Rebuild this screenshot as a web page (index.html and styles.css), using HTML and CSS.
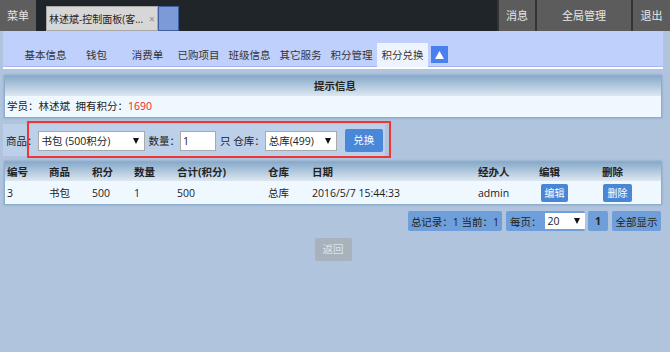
FILE: index.html
```html
<!DOCTYPE html>
<html>
<head>
<meta charset="utf-8">
<title>积分兑换</title>
<link rel="stylesheet" href="styles.css">
</head>
<body>
<div class="topbar">
  <div class="menu">菜单</div>
  <div class="tabs">
    <div class="tab">林述斌-控制面板(客...<span class="close">×</span></div>
    <div class="tab-blue"></div>
  </div>
  <div class="right">
    <div class="ritem r1">消息</div>
    <div class="ritem r2">全局管理</div>
    <div class="ritem r3">退出</div>
  </div>
</div>
<div class="wrap">
  <div class="nav">
    <span class="ni">基本信息</span>
    <span class="ni">钱包</span>
    <span class="ni">消费单</span>
    <span class="ni">已购项目</span>
    <span class="ni">班级信息</span>
    <span class="ni">其它服务</span>
    <span class="ni">积分管理</span>
    <span class="ni active">积分兑换</span>
    <span class="up"><svg width="9" height="8" viewBox="0 0 9 8"><polygon points="4.5,0 9,8 0,8" fill="#fff"/></svg></span>
  </div>

  <div class="panel info">
    <div class="phead">提示信息</div>
    <div class="pbody">学员：林述斌&nbsp; 拥有积分：<span class="red">1690</span></div>
  </div>

  <div class="form">
    <span class="lbl">商品：</span>
    <div class="sel s1"><span>书包 (500积分)</span><svg class="arr" width="6" height="6" viewBox="0 0 6 6"><polygon points="0,0 6,0 3,6" fill="#111"/></svg></div>
    <span class="lbl l2">数量：</span>
    <div class="inp">1</div>
    <span class="lbl l3">只 仓库：</span>
    <div class="sel s2"><span>总库(499)</span><svg class="arr" width="6" height="6" viewBox="0 0 6 6"><polygon points="0,0 6,0 3,6" fill="#111"/></svg></div>
    <span class="btn-blue">兑换</span>
    <div class="mark"></div>
  </div>

  <div class="panel tbl">
    <div class="row thead">
      <span>编号</span><span>商品</span><span>积分</span><span>数量</span><span>合计(积分)</span><span>仓库</span><span>日期</span><span>经办人</span><span>编辑</span><span>删除</span>
    </div>
    <div class="row tbody">
      <span>3</span><span>书包</span><span>500</span><span>1</span><span>500</span><span>总库</span><span>2016/5/7 15:44:33</span><span>admin</span><span><i class="sbtn e">编辑</i></span><span><i class="sbtn d">删除</i></span>
    </div>
  </div>

  <div class="pager">
    <span class="pbox p1">总记录：1 当前：1</span>
    <span class="pbox p2">每页：<span class="psel"><span>20</span><svg class="arr" width="6" height="6" viewBox="0 0 6 6"><polygon points="0,0 6,0 3,6" fill="#111"/></svg></span></span>
    <span class="pbox p3">1</span>
    <span class="pbox p4">全部显示</span>
  </div>

  <div class="back"><span class="btn-gray">返回</span></div>
</div>
</body>
</html>
```

FILE: styles.css
```css
* { box-sizing: border-box; }
html, body { margin: 0; padding: 0; }
body {
  background: #b0c4de;
  font-family: "Open Sans", "Noto Sans CJK SC", sans-serif;
  font-size: 10.5px;
  color: #222;
  width: 670px;
  height: 352px;
  overflow: hidden;
}

/* top bar */
.topbar {
  height: 31px;
  background: #1f2528;
  display: flex;
  color: #e6e6e6;
  font-size: 11px;
}
.menu {
  width: 36px;
  background: #5e5e5e;
  display: flex;
  align-items: center;
  justify-content: center;
  padding-bottom: 2px;
}
.tabs {
  display: flex;
  margin-left: 10px;
  padding-top: 6px;
  height: 31px;
}
.tab {
  width: 112px;
  background: #d7d7d7;
  border: 1px solid #a8a8a8;
  color: #1e1e1e;
  font-size: 10px;
  display: flex;
  align-items: center;
  padding-left: 2px;
  white-space: nowrap;
  overflow: hidden;
}
.close { color: #8a8a8a; margin-left: 6px; font-size: 10px; }
.tab-blue {
  width: 21px;
  background: #7c9ad8;
  border: 1px solid #3f5f9f;
}
.right { margin-left: auto; display: flex; }
.ritem {
  height: 31px;
  background: #5c5c5c;
  border-left: 2px solid #333;
  display: flex;
  align-items: center;
  justify-content: center;
  padding-bottom: 1px;
}
.r1 { width: 38px; }
.r2 { width: 96px; }
.r3 { width: 39px; }

/* wrapper */
.wrap { padding: 0 7px 0 3px; }

/* nav */
.nav {
  height: 38px;
  background: #c0d0fc;
  border-bottom: 2px solid #fff;
  box-shadow: inset 0 -1px 0 #a9b4f2;
  display: flex;
  align-items: flex-end;
  padding-left: 17px;
  color: #333;
}
.ni {
  width: 51px;
  height: 24px;
  line-height: 24px;
  text-align: center;
  white-space: nowrap;
}
.ni.active {
  background: #eef4fd;
  color: #333;
}
.up {
  width: 17px;
  height: 17px;
  margin-left: 3px;
  margin-bottom: 4px;
  background: #4a7fee;
  display: flex;
  align-items: center;
  justify-content: center;
}

/* panels */
.panel {
  margin: 6px 1px 0 1px;
  border: 1px solid #8eaecb;
  box-shadow: 0 0 2px rgba(80,120,160,0.5);
  background: #f0f8ff;
}
.phead {
  height: 20px;
  line-height: 20px;
  text-align: center;
  font-weight: bold;
  background: linear-gradient(#87aaca, #dde7f0);
  color: #222;
  padding-left: 4px;
}
.pbody {
  height: 21px;
  line-height: 21px;
  padding-left: 2px;
}
.red { color: #ee2222; }

/* form */
.form {
  position: relative;
  margin-top: 6px;
  width: 382px;
  height: 32px;
  background: #bcd0ea;
  display: flex;
  align-items: center;
  padding-left: 3px;
}
.lbl { white-space: nowrap; }
.sel {
  height: 20px;
  background: #fff;
  border: 1px solid #a9a9a9;
  display: flex;
  align-items: center;
  justify-content: space-between;
  padding: 0 5px 0 3px;
  margin-top: 1px;
}
.s1 { width: 107px; }
.s2 { width: 72px; }
.arr { display: block; }
.l2 { margin-left: 4px; }
.inp {
  width: 36px;
  height: 20px;
  background: #fff;
  border: 1px solid #a9a9a9;
  line-height: 18px;
  padding-left: 2px;
  margin-top: 1px;
}
.l3 { margin-left: 4px; }
.btn-blue {
  margin-left: 8px;
  width: 38px;
  height: 23px;
  line-height: 23px;
  text-align: center;
  background: #4a87d8;
  color: #fff;
  border-radius: 2px;
}
.mark {
  position: absolute;
  left: 24px;
  top: -3px;
  width: 364px;
  height: 37px;
  border: 2px solid #f03535;
}

/* table */
.tbl { margin-top: 5px; }
.row {
  display: grid;
  grid-template-columns: 42px 43px 42px 43px 91px 44px 166px 61px 63px 1fr;
  padding-left: 2px;
  align-items: center;
  white-space: nowrap;
}
.thead {
  height: 19px;
  font-weight: bold;
  background: linear-gradient(#87aaca, #dde7f0);
}
.tbody { height: 23px; }
.sbtn {
  font-style: normal;
  display: inline-block;
  height: 18px;
  line-height: 18px;
  background: #4a86d6;
  color: #fff;
  border-radius: 2px;
  text-align: center;
  font-size: 10px;
  margin-left: 2px;
}
.sbtn.e { width: 27px; }
.sbtn.d { width: 29px; margin-left: 1px; }

/* pager */
.pager {
  margin-top: 6px;
  margin-right: 2px;
  display: flex;
  justify-content: flex-end;
  height: 20px;
}
.pbox {
  height: 20px;
  background: #6e9fdb;
  border-radius: 2px;
  color: #222;
  display: flex;
  align-items: center;
  justify-content: center;
  white-space: nowrap;
}
.p1 { width: 94px; }
.p2 { width: 79px; margin-left: 4px; justify-content: flex-start; padding-left: 4px; }
.p3 { width: 20px; margin-left: 3px; font-weight: bold; }
.p4 { width: 49px; margin-left: 4px; }
.psel {
  width: 40px;
  height: 16px;
  background: #fff;
  display: flex;
  align-items: center;
  justify-content: space-between;
  padding: 0 5px 0 3px;
  margin-left: 3px;
}

/* back */
.back {
  margin-top: 7px;
  display: flex;
  justify-content: center;
}
.btn-gray {
  width: 37px;
  height: 23px;
  line-height: 23px;
  text-align: center;
  background: #a8b2bd;
  color: #dde3ea;
  border-radius: 2px;
}
```
